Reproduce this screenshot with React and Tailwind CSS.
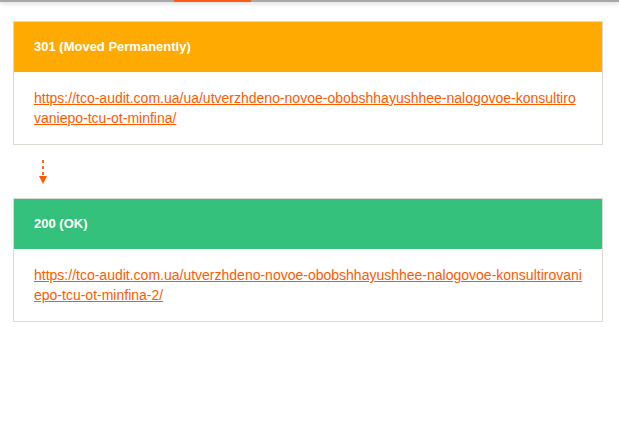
export default function App() {
  const font = { fontFamily: '"Liberation Sans", Arial, sans-serif' };
  return (
    <div className="w-[619px] h-[431px] bg-white relative overflow-hidden" style={font}>
      <div className="h-[2px] bg-[#a8a8a8] relative shadow-[0_1px_4px_rgba(0,0,0,0.25)]">
        <div className="absolute left-[174px] top-0 w-[77px] h-[2px] bg-[#ff5a14]" />
      </div>
      <div className="pl-[13px] pr-[16px] pt-[19px]">
        <div className="border border-[#ddd9d2]">
          <div className="h-[50px] bg-[#ffaa00] flex items-center px-5 text-white font-bold text-[13px]">
            301 (Moved Permanently)
          </div>
          <div className="px-5 py-4 text-[14px] leading-[20px] break-all">
            <a href="#" className="text-[#ff5a00] underline">https://tco-audit.com.ua/ua/utverzhdeno-novoe-obobshhayushhee-nalogovoe-konsultirovaniepo-tcu-ot-minfina/</a>
          </div>
        </div>
        <div className="h-[53px] flex items-start pl-[25px] pt-[15px]">
          <svg width="10" height="26" viewBox="0 0 10 26">
            <line x1="5" y1="0" x2="5" y2="15" stroke="#ff6a1a" strokeWidth="2" strokeDasharray="3 3" />
            <polygon points="1,16 9,16 5,24" fill="#ff5a00" />
          </svg>
        </div>
        <div className="border border-[#ddd9d2]">
          <div className="h-[50px] bg-[#33c17c] flex items-center px-5 text-white font-bold text-[13px]">
            200 (OK)
          </div>
          <div className="px-5 py-4 text-[14px] leading-[20px] break-all">
            <a href="#" className="text-[#ff5a00] underline">https://tco-audit.com.ua/utverzhdeno-novoe-obobshhayushhee-nalogovoe-konsultirovaniepo-tcu-ot-minfina-2/</a>
          </div>
        </div>
      </div>
    </div>
  );
}
